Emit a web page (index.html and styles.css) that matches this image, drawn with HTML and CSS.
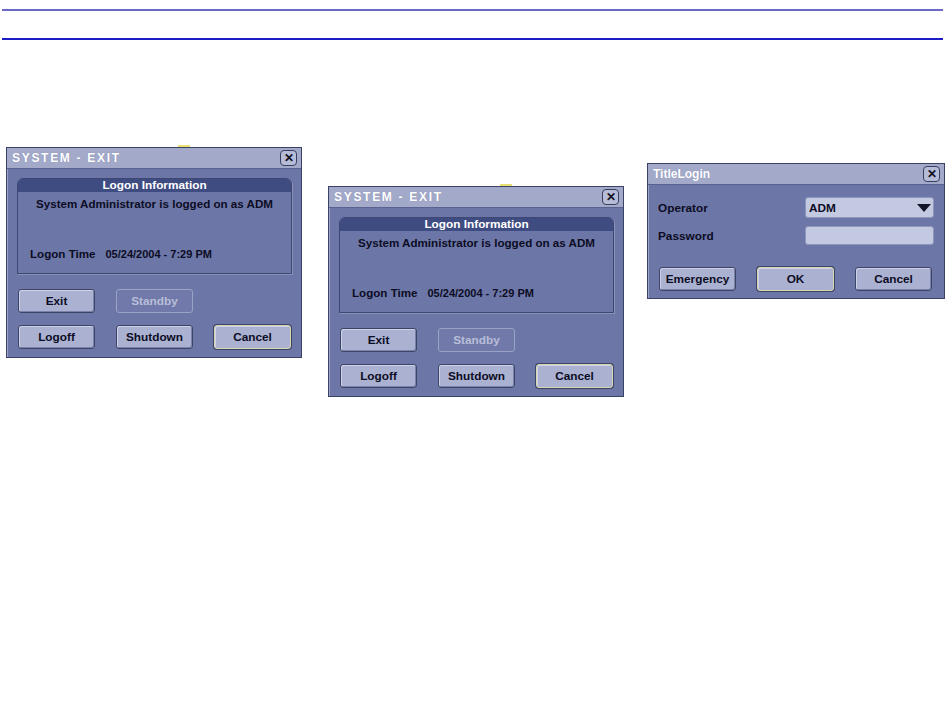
FILE: index.html
```html
<!DOCTYPE html>
<html lang="en">
<head>
  <meta charset="UTF-8" />
  <title>System Exit / Login</title>
  <link rel="stylesheet" href="styles.css">
</head>
<body>
  <div class="rule rule-top"></div>
  <div class="rule rule-bottom"></div>

  <div class="shots">
    <!-- system exit dialog, first shot -->
    <div class="dialog exit-one">
      <span class="mark"></span>
      <div class="titlebar">
        <span class="title spaced">SYSTEM - EXIT</span>
        <span class="close">&#x2715;</span>
      </div>
      <div class="info">
        <div class="info-head">Logon Information</div>
        <div class="info-who">System Administrator is logged on as ADM</div>
        <div class="info-time"><span>Logon Time</span><span>05/24/2004 - 7:29 PM</span></div>
      </div>
      <div class="buttons">
        <button class="btn">Exit</button>
        <button class="btn disabled">Standby</button>
        <span></span>
        <button class="btn">Logoff</button>
        <button class="btn">Shutdown</button>
        <button class="btn focus">Cancel</button>
      </div>
    </div>

    <!-- same dialog, second shot -->
    <div class="dialog exit-two">
      <span class="mark"></span>
      <div class="titlebar">
        <span class="title spaced">SYSTEM - EXIT</span>
        <span class="close">&#x2715;</span>
      </div>
      <div class="info">
        <div class="info-head">Logon Information</div>
        <div class="info-who">System Administrator is logged on as ADM</div>
        <div class="info-time"><span>Logon Time</span><span>05/24/2004 - 7:29 PM</span></div>
      </div>
      <div class="buttons">
        <button class="btn">Exit</button>
        <button class="btn disabled">Standby</button>
        <span></span>
        <button class="btn">Logoff</button>
        <button class="btn">Shutdown</button>
        <button class="btn focus">Cancel</button>
      </div>
    </div>

    <!-- login dialog -->
    <div class="dialog login">
      <div class="titlebar">
        <span class="title">TitleLogin</span>
        <span class="close">&#x2715;</span>
      </div>
      <div class="form">
        <div class="field">
          <span class="label">Operator</span>
          <div class="select">
            <span>ADM</span>
            <span class="arrow"></span>
          </div>
        </div>
        <div class="field">
          <span class="label">Password</span>
          <div class="input"></div>
        </div>
      </div>
      <div class="buttons login-buttons">
        <button class="btn">Emergency</button>
        <button class="btn focus">OK</button>
        <button class="btn">Cancel</button>
      </div>
    </div>
  </div>
</body>
</html>
```

FILE: styles.css
```css
body {
  margin: 0;
  background-color: #ffffff;
  font-family: "Liberation Sans", Arial, sans-serif;
  width: 950px;
  height: 710px;
}
.rule {
  margin-left: 2px;
  width: 941px;
  height: 2px;
}
.rule-top {
  margin-top: 9px;
  background-color: #6a6ac6;
}
.rule-bottom {
  margin-top: 27px;
  background-color: #1c1cc8;
}
.shots {
  display: flex;
  align-items: flex-start;
  padding-left: 6px;
}
.dialog {
  position: relative;
  box-sizing: border-box;
  width: 296px;
  height: 211px;
  background-color: #6d77a7;
  border: 1px solid #3c4266;
  box-shadow: inset 1px 1px 0 #9ca4c8;
}
.exit-one {
  margin-top: 107px;
}
.exit-two {
  margin-top: 146px;
  margin-left: 26px;
}
.login {
  margin-top: 123px;
  margin-left: 23px;
  width: 298px;
  height: 136px;
}
.mark {
  position: absolute;
  top: -3px;
  left: 171px;
  width: 12px;
  height: 2px;
  background-color: #e8e070;
}
.titlebar {
  height: 20px;
  background-color: #a3a9c9;
  border-bottom: 1px solid #5a6290;
  display: flex;
  align-items: center;
  justify-content: space-between;
  padding: 0 4px 0 5px;
}
.title {
  color: #ffffff;
  font-weight: bold;
  font-size: 12px;
  text-shadow: 0 0 1px #8088b0;
}
.title.spaced {
  letter-spacing: 1.7px;
}
.close {
  box-sizing: border-box;
  width: 17px;
  height: 16px;
  border: 1px solid #383e60;
  border-radius: 4px;
  background-color: #b6bcd8;
  color: #101020;
  font-size: 12px;
  font-weight: bold;
  line-height: 14px;
  text-align: center;
}
.info {
  margin: 9px 9px 0 10px;
  height: 96px;
  box-sizing: border-box;
  border: 1px solid #3e4674;
  border-top-left-radius: 6px;
  border-top-right-radius: 6px;
  box-shadow: 1px 1px 0 #8a92ba;
  color: #0c0c24;
  font-size: 11.6px;
  font-weight: bold;
}
.info-head {
  height: 13px;
  line-height: 13px;
  background-color: #3f4c82;
  color: #ffffff;
  text-align: center;
  border-top-left-radius: 5px;
  border-top-right-radius: 5px;
  font-size: 11.8px;
}
.info-who {
  text-align: center;
  margin-top: 5px;
}
.info-time {
  margin-top: 37px;
  padding-left: 12px;
  display: flex;
  gap: 10px;
}
.info-time span:last-child {
  font-size: 11px;
  line-height: 14px;
}
.buttons {
  display: grid;
  grid-template-columns: 77px 77px 77px;
  column-gap: 21px;
  row-gap: 12px;
  margin-top: 15px;
  padding-left: 11px;
}
.btn {
  box-sizing: border-box;
  height: 24px;
  padding: 0;
  background-color: #aab1d1;
  border: 1px solid #3e4466;
  border-radius: 3px;
  box-shadow: inset 1px 1px 0 #cdd2e8, inset -1px -1px 0 #7a82aa;
  color: #0c0c24;
  font-family: "Liberation Sans", Arial, sans-serif;
  font-size: 11.8px;
  font-weight: bold;
}
.btn.disabled {
  background-color: #7079a9;
  border-color: #9aa2c6;
  box-shadow: none;
  color: #b8bed8;
}
.btn.focus {
  border-color: #d8d8b0;
  box-shadow: 0 0 0 1px #3e4466, inset 1px 1px 0 #cdd2e8;
}
.form {
  padding: 12px 10px 0 10px;
  display: flex;
  flex-direction: column;
  gap: 8px;
}
.field {
  display: flex;
  align-items: center;
  justify-content: space-between;
}
.label {
  color: #0c0c24;
  font-size: 11.8px;
  font-weight: bold;
}
.select, .input {
  box-sizing: border-box;
  width: 129px;
  height: 21px;
  background-color: #c3c9e1;
  border: 1px solid #8e96bc;
  border-radius: 3px;
}
.input {
  height: 19px;
}
.select {
  display: flex;
  align-items: center;
  justify-content: space-between;
  padding: 0 2px 0 3px;
  font-size: 11.8px;
  font-weight: bold;
  color: #0c0c24;
}
.arrow {
  width: 0;
  height: 0;
  border-left: 7px solid transparent;
  border-right: 7px solid transparent;
  border-top: 8px solid #141428;
}
.login-buttons {
  margin-top: 22px;
}
```
